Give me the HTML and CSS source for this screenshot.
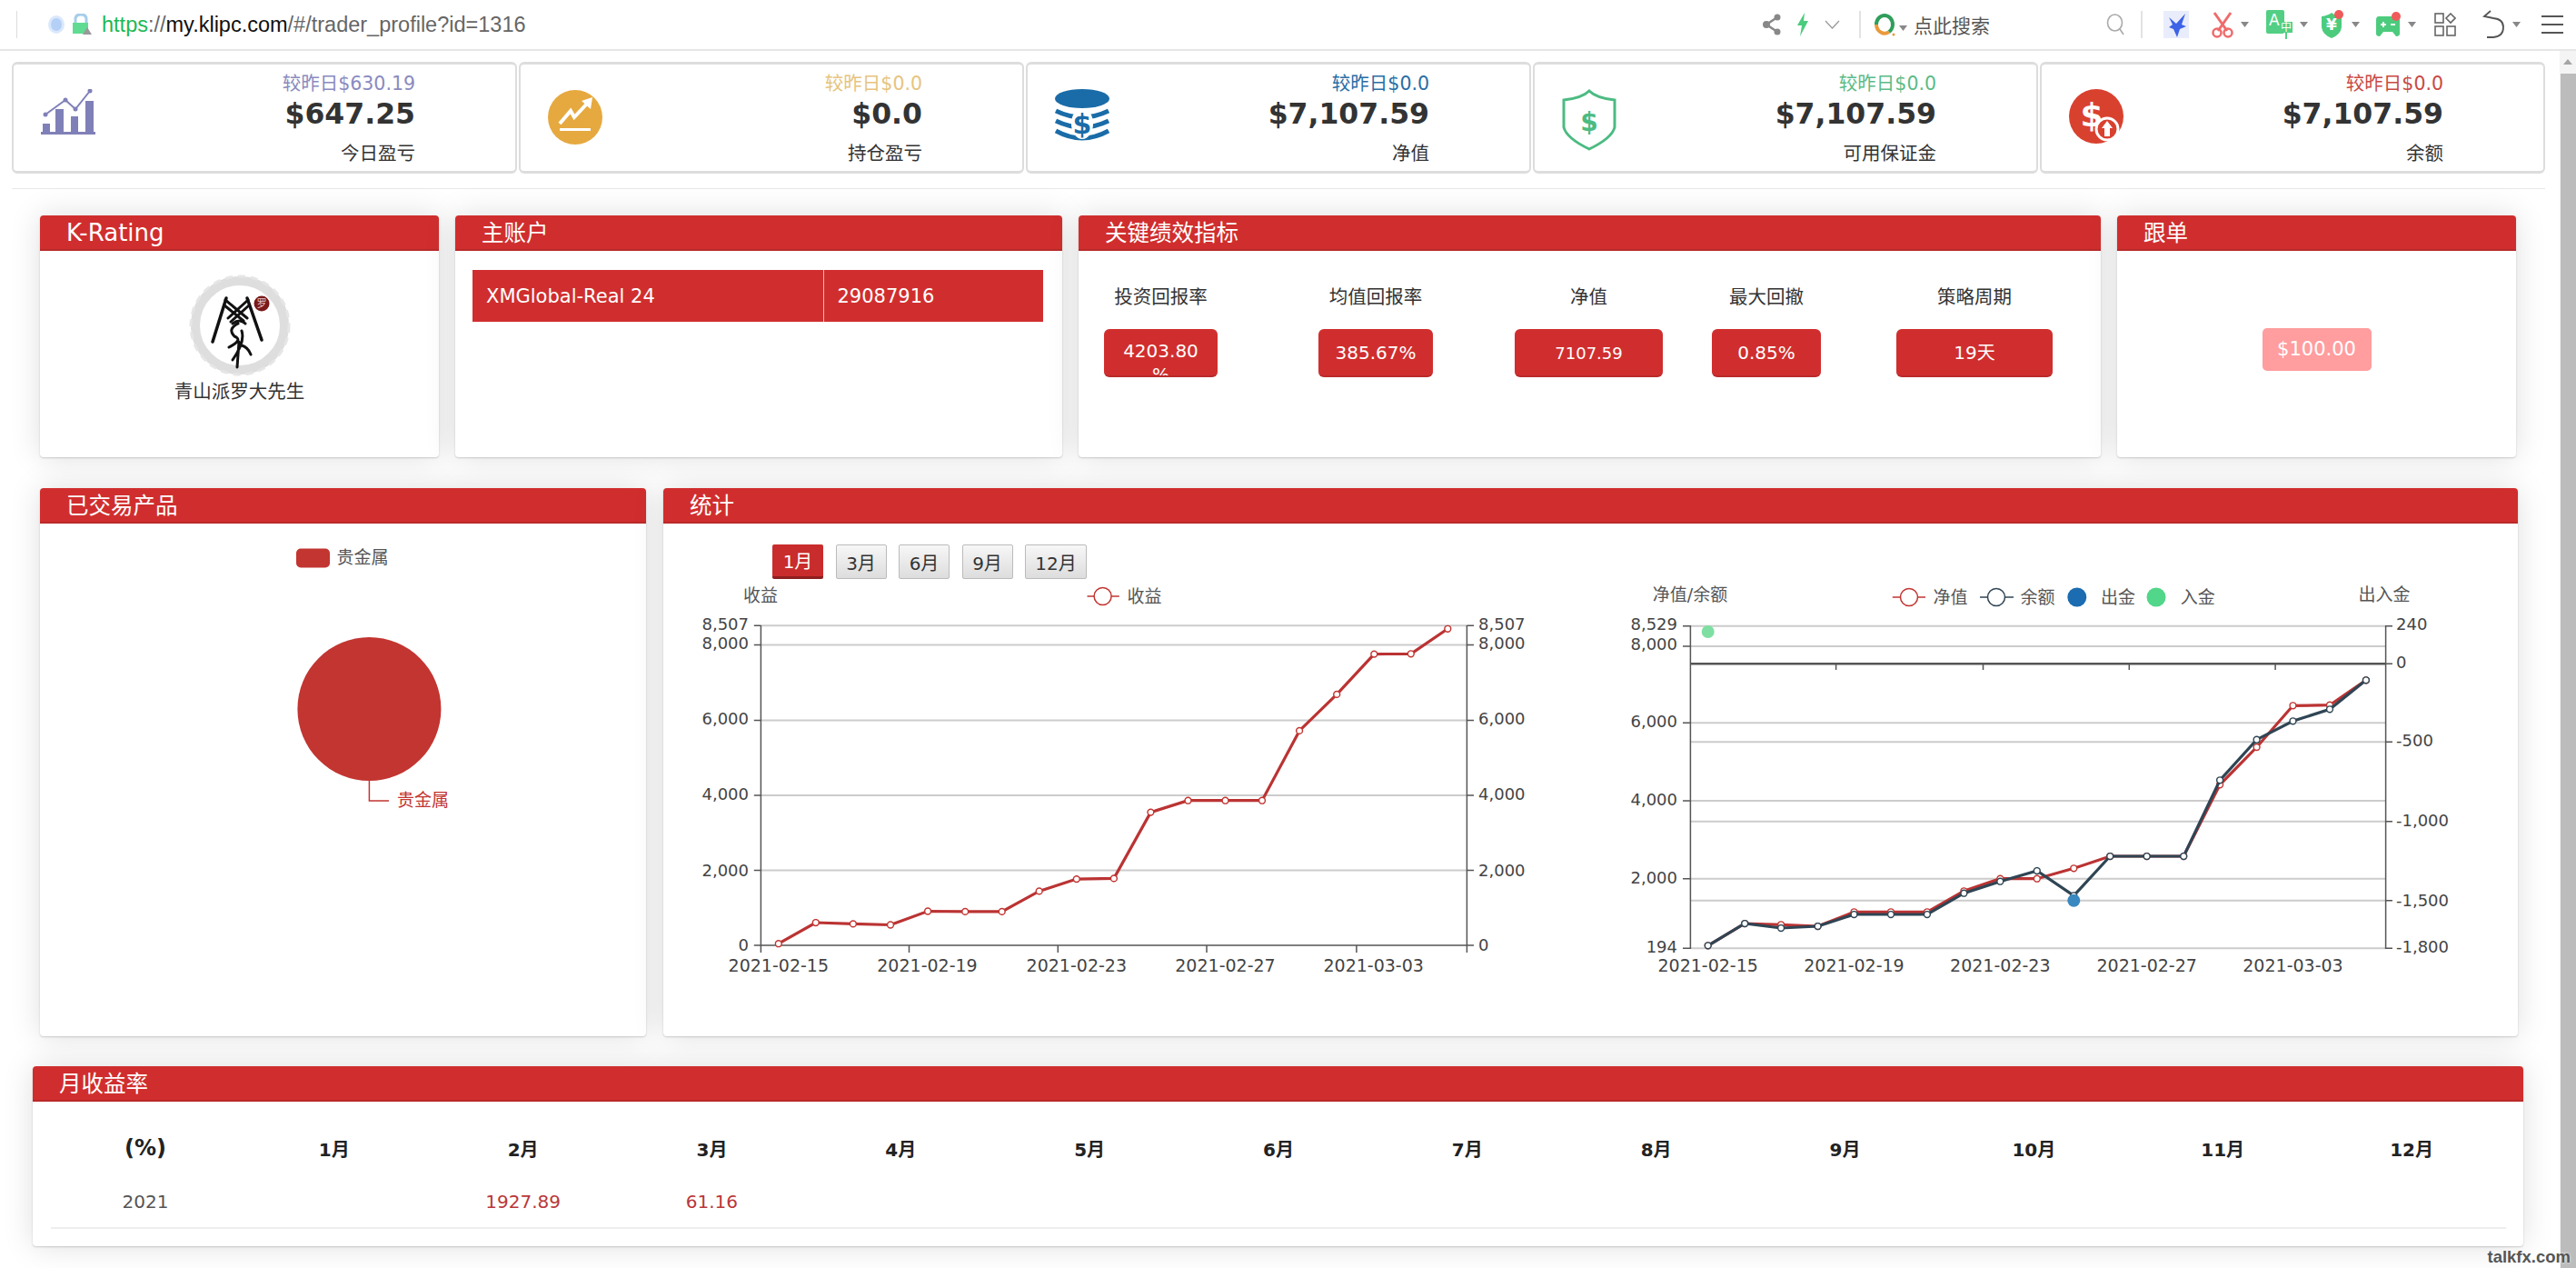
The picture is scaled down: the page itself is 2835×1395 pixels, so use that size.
FILE: index.html
```html
<!DOCTYPE html>
<html lang="en">
<head>
    <meta charset="UTF-8">
    <meta name="viewport" content="width=device-width, initial-scale=1.0">
    <title>Trader Profile - Klipc</title>
    <link rel="stylesheet" href="styles.css">
</head>
<body>

    <!-- Browser Address Bar -->
    <div class="topbar">
        <span class="bar-line"></span>
        <svg class="site-icon" width="20" height="22" viewBox="0 0 20 22">
            <ellipse cx="10" cy="11" rx="9" ry="10" fill="#dbe8fb"/>
            <ellipse cx="10" cy="11" rx="6" ry="7" fill="#b5d0f7"/>
        </svg>
        <svg class="lock-icon" width="24" height="24" viewBox="0 0 24 24">
            <path d="M6 11 V6 Q6 1 12 1 Q18 1 18 6 V11" fill="none" stroke="#a6cdea" stroke-width="3"/>
            <rect x="3" y="10" width="17" height="12" fill="#5fdc92"/>
            <polygon points="19,15 24,23 14,23" fill="#999"/>
        </svg>
        <div class="url"><span class="url-scheme">https</span>://<span class="url-host">my.klipc.com</span>/#/trader_profile?id=1316</div>

        <div class="toolbar">
            <svg width="20" height="24" viewBox="0 0 20 24">
                <path d="M16 4 L4 12 L16 20" fill="none" stroke="#888" stroke-width="2.5"/>
                <circle cx="16" cy="4" r="3.5" fill="#888"/>
                <circle cx="4" cy="12" r="4" fill="#888"/>
                <circle cx="16" cy="20" r="3.5" fill="#888"/>
            </svg>
            <svg class="tb-bolt" width="14" height="26" viewBox="0 0 14 26">
                <polygon points="9,0 1,14 6,14 4,26 13,9 8,9" fill="#4ccb7d"/>
            </svg>
            <svg class="tb-bolt" width="17" height="10" viewBox="0 0 17 10">
                <polyline points="1,1 8.5,9 16,1" fill="none" stroke="#999" stroke-width="1.2"/>
            </svg>
            <span class="tb-divider tb-divider-a"></span>
            <svg class="tb-logo" width="24" height="26" viewBox="0 0 24 26">
                <path d="M3 13 A9 10 0 0 1 21 13" fill="none" stroke="#2e9e5b" stroke-width="4"/>
                <path d="M3 13 A9 10 0 0 0 17 21" fill="none" stroke="#e99a3c" stroke-width="4"/>
                <path d="M21 13 A9 10 0 0 1 17 21" fill="none" stroke="#2e9e5b" stroke-width="4"/>
                <circle cx="22" cy="24" r="1.5" fill="#e99a3c"/>
            </svg>
            <svg class="tb-caret-search caret" width="9" height="6" viewBox="0 0 9 6"><polygon points="0,0 9,0 4.5,6"/></svg>
            <span class="search-text">点此搜索</span>
            <svg class="tb-magnifier" width="21" height="24" viewBox="0 0 21 24">
                <ellipse cx="9.500" cy="10" rx="8" ry="9" fill="none" stroke="#aaa" stroke-width="1.6"/>
                <line x1="15" y1="17" x2="19" y2="23" stroke="#aaa" stroke-width="1.6"/>
            </svg>
            <span class="tb-divider tb-divider-b"></span>

            <div class="tools">
                <div class="tool tool-sm">
                    <svg width="28" height="30" viewBox="0 0 28 30">
                        <rect width="28" height="30" fill="#e9edfb"/>
                        <polygon points="6,7 14,14 24,3 20,15 25,17 18,20 15,29 11,20 6,18 10,15" fill="#3d63e6"/>
                    </svg>
                </div>
                <div class="tool">
                    <svg width="24" height="30" viewBox="0 0 24 30">
                        <path d="M3 2 L17 22 M21 2 L7 22" fill="none" stroke="#ef6b6b" stroke-width="3"/>
                        <circle cx="6" cy="24" r="4.500" fill="none" stroke="#ef6b6b" stroke-width="2.5"/>
                        <circle cx="18" cy="24" r="4.500" fill="none" stroke="#ef6b6b" stroke-width="2.5"/>
                    </svg>
                    <svg class="caret" width="9" height="6" viewBox="0 0 9 6"><polygon points="0,0 9,0 4.5,6"/></svg>
                </div>
                <div class="tool">
                    <svg width="29" height="32" viewBox="0 0 29 32">
                        <rect width="20" height="26" rx="2" fill="#52cf84"/>
                        <text class="icon-a" x="3" y="17">A</text>
                        <rect x="15" y="13" width="14" height="12" fill="#52cf84"/>
                        <text class="icon-zh" x="22" y="23">中</text>
                        <line x1="22" y1="24" x2="22" y2="32" stroke="#52cf84" stroke-width="2"/>
                    </svg>
                    <svg class="caret" width="9" height="6" viewBox="0 0 9 6"><polygon points="0,0 9,0 4.5,6"/></svg>
                </div>
                <div class="tool">
                    <svg width="26" height="32" viewBox="0 0 26 32">
                        <path d="M1 7 Q8 6 12 3 Q16 6 23 7 V19 Q22 27 12 31 Q2 27 1 19 Z" fill="#4ccb7d"/>
                        <text class="icon-yen" x="12" y="22">¥</text>
                        <circle cx="20" cy="5" r="5" fill="#ef5a5a"/>
                    </svg>
                    <svg class="caret" width="9" height="6" viewBox="0 0 9 6"><polygon points="0,0 9,0 4.5,6"/></svg>
                </div>
                <div class="tool tool-lg">
                    <svg width="28" height="28" viewBox="0 0 28 28">
                        <path d="M4 5 H24 Q27 5 27 9 V24 Q27 27 23 27 L19 22 H9 L5 27 Q1 27 1 24 V9 Q1 5 4 5 Z" fill="#4ccb7d"/>
                        <path d="M6 14 H12 M9 11 V17 M17 14 H22" stroke="#fff" stroke-width="2"/>
                        <circle cx="23" cy="5" r="5" fill="#ef5a5a"/>
                    </svg>
                    <svg class="caret" width="9" height="6" viewBox="0 0 9 6"><polygon points="0,0 9,0 4.5,6"/></svg>
                </div>
                <div class="tool tool-sm">
                    <svg width="24" height="26" viewBox="0 0 24 26" fill="none" stroke="#666" stroke-width="1.6">
                        <rect x="1" y="1" width="9" height="10"/>
                        <polygon points="18,1 23,6 18,11 13,6"/>
                        <rect x="1" y="15" width="9" height="10"/>
                        <rect x="14" y="15" width="9" height="10"/>
                    </svg>
                </div>
                <div class="tool tool-md">
                    <svg width="25" height="32" viewBox="0 0 25 32" fill="none" stroke="#555" stroke-width="1.8">
                        <path d="M9 1 L2 7 L12 9 Q23 10 23 19 Q23 29 12 30 H5"/>
                    </svg>
                    <svg class="caret" width="9" height="6" viewBox="0 0 9 6"><polygon points="0,0 9,0 4.5,6"/></svg>
                </div>
                <svg width="24" height="22" viewBox="0 0 24 22">
                    <path d="M0 2 H24 M0 11 H24 M0 20 H24" stroke="#555" stroke-width="2"/>
                </svg>
            </div>
        </div>
    </div>

    <div class="page">
        <div class="main">

            <!-- Stat Cards -->
            <div class="stats">
                <div class="stat">
                    <svg width="60" height="50" viewBox="0 0 60 50" class="stat-icon">
                        <g fill="#8080b8">
                            <rect x="2" y="38" width="8" height="10"/>
                            <rect x="16" y="22" width="9" height="26"/>
                            <rect x="33" y="30" width="8" height="18"/>
                            <rect x="49" y="13" width="9" height="35"/>
                            <rect y="47" width="60" height="3"/>
                            <circle cx="5" cy="28" r="2.500"/>
                            <circle cx="27" cy="12" r="2.500"/>
                            <circle cx="38" cy="22" r="2.500"/>
                            <circle cx="54" cy="2" r="2.500"/>
                        </g>
                        <polyline points="5,28 27,12 38,22 54,2" fill="none" stroke="#8080b8" stroke-width="2"/>
                    </svg>
                    <div class="stat-info">
                        <div class="stat-delta delta-purple">较昨日$630.19</div>
                        <div class="stat-value">$647.25</div>
                        <div class="stat-label">今日盈亏</div>
                    </div>
                </div>
                <div class="stat">
                    <svg width="60" height="62" viewBox="0 0 60 62" class="stat-icon">
                        <circle cx="30" cy="31" r="30" fill="#e6a93f"/>
                        <polyline points="13,38 25,24 29,31 44,15" fill="none" stroke="#fff" stroke-width="4"/>
                        <polygon points="37,13 49,9 47,22" fill="#fff"/>
                        <rect x="13" y="43" width="34" height="3" fill="#fff"/>
                    </svg>
                    <div class="stat-info">
                        <div class="stat-delta delta-gold">较昨日$0.0</div>
                        <div class="stat-value">$0.0</div>
                        <div class="stat-label">持仓盈亏</div>
                    </div>
                </div>
                <div class="stat">
                    <svg width="60" height="60" viewBox="0 0 60 60" class="stat-icon">
                        <ellipse cx="30" cy="10.500" rx="30" ry="10.500" fill="#1a6ca8"/>
                        <g fill="none" stroke="#1a6ca8" stroke-width="5">
                            <path d="M1 24 Q30 38 59 24"/>
                            <path d="M1 35 Q30 49 59 35"/>
                            <path d="M1 46 Q30 62 59 46"/>
                        </g>
                        <ellipse cx="30" cy="38" rx="12" ry="17" fill="#fff"/>
                        <text class="icon-dollar dollar-blue" x="30" y="49">$</text>
                    </svg>
                    <div class="stat-info">
                        <div class="stat-delta delta-blue">较昨日$0.0</div>
                        <div class="stat-value">$7,107.59</div>
                        <div class="stat-label">净值</div>
                    </div>
                </div>
                <div class="stat">
                    <svg width="60" height="68" viewBox="0 0 60 68" class="stat-icon">
                        <path d="M30 2 Q38 10 58 12 V42 Q55 54 30 66 Q5 54 2 42 V12 Q22 10 30 2 Z" fill="none" stroke="#4cbb82" stroke-width="3"/>
                        <text class="icon-dollar dollar-green" x="30" y="46">$</text>
                    </svg>
                    <div class="stat-info">
                        <div class="stat-delta delta-green">较昨日$0.0</div>
                        <div class="stat-value">$7,107.59</div>
                        <div class="stat-label">可用保证金</div>
                    </div>
                </div>
                <div class="stat">
                    <svg width="60" height="60" viewBox="0 0 60 60" class="stat-icon">
                        <circle cx="30" cy="30" r="30" fill="#d9412f"/>
                        <text class="icon-dollar dollar-white" x="25" y="41">$</text>
                        <circle cx="42" cy="44" r="12" fill="#d9412f" stroke="#fff" stroke-width="3"/>
                        <polygon points="42,35 48,43 45,43 45,52 39,52 39,43 36,43" fill="#fff"/>
                    </svg>
                    <div class="stat-info">
                        <div class="stat-delta delta-red">较昨日$0.0</div>
                        <div class="stat-value">$7,107.59</div>
                        <div class="stat-label">余额</div>
                    </div>
                </div>
            </div>
            <div class="divider"></div>

            <!-- First Row -->
            <div class="row row-one">
                <div class="panel">
                    <h2 class="panel-title title-latin">K-Rating</h2>
                    <div class="rating-body">
                        <svg width="112" height="112" viewBox="0 0 112 112">
                            <circle cx="56" cy="56" r="49" fill="none" stroke="#dedede" stroke-width="10"/>
                            <circle cx="56" cy="56" r="54" fill="none" stroke="#e6e6e6" stroke-width="3" stroke-dasharray="8 6"/>
                            <g fill="none" stroke="#111" stroke-linecap="round">
                                <path d="M41 26 L26 74" stroke-width="3.500"/>
                                <path d="M64 26 L80 72" stroke-width="3.500"/>
                                <path d="M40 28 L64 48 M39 34 L60 51 M65 28 L43 48 M66 34 L46 52" stroke-width="3"/>
                                <path d="M48 54 Q56 48 62 54 M54 54 Q42 60 50 68 Q60 72 44 80 M58 62 Q62 74 48 94 M55 74 L53 102 M58 78 Q65 80 68 88" stroke-width="3"/>
                            </g>
                            <circle cx="80" cy="32" r="8.500" fill="#7a1a1a"/>
                            <text class="seal" x="80" y="36">罗</text>
                        </svg>
                        <div class="rating-name">青山派罗大先生</div>
                    </div>
                </div>
                <div class="panel">
                    <h2 class="panel-title">主账户</h2>
                    <table class="account-table">
                        <tr>
                            <td class="account-name">XMGlobal-Real 24</td>
                            <td>29087916</td>
                        </tr>
                    </table>
                </div>
                <div class="panel">
                    <h2 class="panel-title">关键绩效指标</h2>
                    <div class="kpi-row">
                        <div class="kpi kpi-a">
                            <div class="kpi-label">投资回报率</div>
                            <div class="kpi-value kpi-wrap">4203.80<wbr>%</div>
                        </div>
                        <div class="kpi kpi-b">
                            <div class="kpi-label">均值回报率</div>
                            <div class="kpi-value">385.67%</div>
                        </div>
                        <div class="kpi kpi-c">
                            <div class="kpi-label">净值</div>
                            <div class="kpi-value kpi-small">7107.59</div>
                        </div>
                        <div class="kpi kpi-d">
                            <div class="kpi-label">最大回撤</div>
                            <div class="kpi-value">0.85%</div>
                        </div>
                        <div class="kpi kpi-e">
                            <div class="kpi-label">策略周期</div>
                            <div class="kpi-value">19天</div>
                        </div>
                    </div>
                </div>
                <div class="panel">
                    <h2 class="panel-title">跟单</h2>
                    <div class="follow-btn">$100.00</div>
                </div>
            </div>

            <!-- Second Row -->
            <div class="row row-two">
                <div class="panel">
                    <h2 class="panel-title">已交易产品</h2>
                    <svg class="pie" width="667" height="500" viewBox="0 0 667 500">
                        <rect x="282" y="27.500" width="37" height="21" rx="5" fill="#c23531"/>
                        <text class="chart-text" x="326.500" y="44">贵金属</text>
                        <circle cx="362.400" cy="204" r="79" fill="#c23531"/>
                        <polyline points="362.400,283 362.400,305 384,305" fill="none" stroke="#c23531" stroke-width="1.500"/>
                        <text class="chart-text text-red" x="393" y="311">贵金属</text>
                    </svg>
                </div>
                <div class="panel">
                    <h2 class="panel-title">统计</h2>
                    <div class="range-btns">
                        <button class="range-btn active">1月</button>
                        <button class="range-btn">3月</button>
                        <button class="range-btn">6月</button>
                        <button class="range-btn">9月</button>
                        <button class="range-btn range-wide">12月</button>
                    </div>
                    <div class="charts">
                        <!-- Profit Chart -->
                        <svg width="930" height="450" viewBox="0 0 930 450">
                            <defs>
                                <marker id="dotRed" viewBox="0 0 10 10" refX="5" refY="5" markerWidth="9" markerHeight="9" markerUnits="userSpaceOnUse">
                                    <circle cx="5" cy="5" r="3.800" fill="#fff" stroke="#c23531" stroke-width="1.600"/>
                                </marker>
                            </defs>
                            <g class="grid">
                                <path d="M87.400 48.200 H864.400 M87.400 69.600 H864.400 M87.400 152.500 H864.400 M87.400 235 H864.400 M87.400 317.500 H864.400"/>
                            </g>
                            <g class="axis">
                                <path d="M87.400 48 V408 M864.400 48 V408 M79.800 400 H872"/>
                                <path d="M79.800 48.200 H87.400 M79.800 69.600 H87.400 M79.800 152.500 H87.400 M79.800 235 H87.400 M79.800 317.500 H87.400"/>
                                <path d="M864.400 48.200 H872 M864.400 69.600 H872 M864.400 152.500 H872 M864.400 235 H872 M864.400 317.500 H872"/>
                                <path d="M250.500 400 V408 M414.300 400 V408 M578 400 V408 M742.900 400 V408"/>
                            </g>
                            <polyline class="line line-red" marker-start="url(#dotRed)" marker-mid="url(#dotRed)" marker-end="url(#dotRed)" points="106.800,398.200 147.800,375 188.900,376.400 230,377.500 271.100,362.500 312.200,362.900 352.700,362.900 393.700,340.400 434.800,327.100 475.900,326.400 516.400,253.600 557.500,240.700 598.500,240.700 639,240.700 680.100,163.900 721.200,123.900 762.300,79.600 802.800,79.300 843.300,51.800"/>

                            <text class="chart-text anchor-mid" x="87" y="22">收益</text>
                            <path d="M446.500 16 H481.800" stroke="#c23531" stroke-width="1.500"/>
                            <circle cx="463.600" cy="16" r="9.500" fill="#fff" stroke="#c23531" stroke-width="1.500"/>
                            <text class="chart-text" x="490.500" y="23">收益</text>

                            <g class="tick-text anchor-end">
                                <text x="74" y="53">8,507</text>
                                <text x="74" y="74">8,000</text>
                                <text x="74" y="157">6,000</text>
                                <text x="74" y="240">4,000</text>
                                <text x="74" y="324">2,000</text>
                                <text x="74" y="406">0</text>
                            </g>
                            <g class="tick-text">
                                <text x="877" y="53">8,507</text>
                                <text x="877" y="74">8,000</text>
                                <text x="877" y="157">6,000</text>
                                <text x="877" y="240">4,000</text>
                                <text x="877" y="324">2,000</text>
                                <text x="877" y="406">0</text>
                            </g>
                            <g class="date-text">
                                <text x="106.800" y="429">2021-02-15</text>
                                <text x="270.500" y="429">2021-02-19</text>
                                <text x="434.800" y="429">2021-02-23</text>
                                <text x="598.500" y="429">2021-02-27</text>
                                <text x="761.700" y="429">2021-03-03</text>
                            </g>
                        </svg>

                        <!-- Equity / Balance Chart -->
                        <svg width="950" height="450" viewBox="0 0 950 450">
                            <defs>
                                <marker id="dotRedTwo" viewBox="0 0 10 10" refX="5" refY="5" markerWidth="9" markerHeight="9" markerUnits="userSpaceOnUse">
                                    <circle cx="5" cy="5" r="3.800" fill="#fff" stroke="#c23531" stroke-width="1.600"/>
                                </marker>
                                <marker id="dotDark" viewBox="0 0 10 10" refX="5" refY="5" markerWidth="9" markerHeight="9" markerUnits="userSpaceOnUse">
                                    <circle cx="5" cy="5" r="3.800" fill="#fff" stroke="#2f4554" stroke-width="1.600"/>
                                </marker>
                            </defs>
                            <g class="grid">
                                <path d="M100.400 48.700 H865.600 M100.400 71 H865.600 M100.400 155.300 H865.600 M100.400 176.300 H865.600 M100.400 241 H865.600 M100.400 263.700 H865.600 M100.400 326.700 H865.600 M100.400 350.700 H865.600 M100.400 403.300 H865.600"/>
                            </g>
                            <g class="axis">
                                <path d="M100.400 48 V404 M865.600 48 V404"/>
                                <path class="axis-zero" d="M100.400 90.300 H865.600"/>
                                <path d="M260.600 90.300 V97 M422.500 90.300 V97 M583.300 90.300 V97 M744.100 90.300 V97"/>
                                <path d="M92 48.700 H100.400 M92 71 H100.400 M92 155.300 H100.400 M92 241 H100.400 M92 326.700 H100.400 M92 403.300 H100.400"/>
                                <path d="M865.600 48.700 H873 M865.600 90.300 H873 M865.600 176.300 H873 M865.600 263.700 H873 M865.600 350.700 H873 M865.600 403.300 H873"/>
                            </g>
                            <polyline class="line line-red" marker-start="url(#dotRedTwo)" marker-mid="url(#dotRedTwo)" marker-end="url(#dotRedTwo)" points="119.700,400.300 160.200,376 200.100,377.300 240.600,379 280.500,363.300 321,363.300 360.900,363.300 401.400,340.300 441.300,326.700 481.800,326.700 522.300,315.300 562.200,302 602.700,302 643.200,302 683.100,223.300 723.600,182 763.500,136.300 804,135.700 843.900,108.300"/>
                            <polyline class="line line-dark" marker-start="url(#dotDark)" marker-mid="url(#dotDark)" marker-end="url(#dotDark)" points="119.700,400.300 160.200,376 200.100,381 240.600,379 280.500,366 321,366 360.900,366 401.400,342.700 441.300,329.700 481.800,318 522.300,345.300 562.200,302 602.700,302 643.200,302 683.100,218.300 723.600,173.700 763.500,153.300 804,140.300 843.900,108.300"/>
                            <circle cx="119.700" cy="55" r="7" fill="#7fdfa3"/>
                            <circle cx="522.300" cy="350.700" r="7" fill="#3a88c0"/>

                            <text class="chart-text anchor-mid" x="100" y="21">净值/余额</text>
                            <text class="chart-text anchor-mid" x="864" y="21">出入金</text>
                            <path d="M322.800 17 H359" stroke="#c23531" stroke-width="1.500"/>
                            <circle cx="341" cy="17" r="9.500" fill="#fff" stroke="#c23531" stroke-width="1.500"/>
                            <text class="chart-text" x="367.400" y="24">净值</text>
                            <path d="M419 17 H456" stroke="#2f4554" stroke-width="1.500"/>
                            <circle cx="437" cy="17" r="9.500" fill="#fff" stroke="#2f4554" stroke-width="1.500"/>
                            <text class="chart-text" x="463.600" y="24">余额</text>
                            <circle cx="525.800" cy="17" r="10.500" fill="#1b6cb0"/>
                            <text class="chart-text" x="552" y="24">出金</text>
                            <circle cx="613" cy="17" r="10.500" fill="#52d68a"/>
                            <text class="chart-text" x="639.700" y="24">入金</text>

                            <g class="tick-text anchor-end">
                                <text x="86" y="53">8,529</text>
                                <text x="86" y="75">8,000</text>
                                <text x="86" y="160">6,000</text>
                                <text x="86" y="246">4,000</text>
                                <text x="86" y="332">2,000</text>
                                <text x="86" y="408">194</text>
                            </g>
                            <g class="tick-text">
                                <text x="877" y="53">240</text>
                                <text x="877" y="95">0</text>
                                <text x="877" y="181">-500</text>
                                <text x="877" y="269">-1,000</text>
                                <text x="877" y="357">-1,500</text>
                                <text x="877" y="408">-1,800</text>
                            </g>
                            <g class="date-text">
                                <text x="119.700" y="429">2021-02-15</text>
                                <text x="280.500" y="429">2021-02-19</text>
                                <text x="441.300" y="429">2021-02-23</text>
                                <text x="602.700" y="429">2021-02-27</text>
                                <text x="763.500" y="429">2021-03-03</text>
                            </g>
                        </svg>
                    </div>
                </div>
            </div>

            <!-- Monthly Returns -->
            <div class="panel monthly">
                <h2 class="panel-title">月收益率</h2>
                <table class="monthly-table">
                    <tr>
                        <th class="th-unit">(%)</th><th>1月</th><th>2月</th><th>3月</th><th>4月</th><th>5月</th><th>6月</th>
                        <th>7月</th><th>8月</th><th>9月</th><th>10月</th><th>11月</th><th>12月</th>
                    </tr>
                    <tr>
                        <td>2021</td><td></td><td class="gain">1927.89</td><td class="gain">61.16</td><td></td><td></td><td></td>
                        <td></td><td></td><td></td><td></td><td></td><td></td>
                    </tr>
                </table>
            </div>
        </div>

        <!-- Scrollbar -->
        <div class="scrollbar">
            <div class="scroll-up"></div>
            <div class="scroll-thumb"></div>
        </div>
    </div>

    <div class="watermark">talkfx.com</div>

</body>
</html>
```

FILE: styles.css
```css
/* Global Styles */
* {
    margin: 0;
    padding: 0;
    box-sizing: border-box;
}

body {
    font-family: "DejaVu Sans", "Noto Sans CJK SC", sans-serif;
    background-color: #ffffff;
    color: #333;
    width: 2835px;
    height: 1395px;
    overflow: hidden;
    position: relative;
}

/* Address Bar */
.topbar {
    display: flex;
    align-items: center;
    height: 56px;
    padding: 0 14px 0 18px;
    border-bottom: 2px solid #e6e6e6;
}

.bar-line {
    width: 1px;
    height: 30px;
    background-color: #ddd;
}

.site-icon {
    margin-left: 33px;
}

.lock-icon {
    margin-left: 5px;
}

.url {
    margin-left: 11px;
    font-family: "Liberation Sans", sans-serif;
    font-size: 23.500px;
    color: #666;
}

.url-scheme {
    color: #1db954;
}

.url-host {
    color: #111;
}

.toolbar {
    display: flex;
    align-items: center;
    margin-left: auto;
}

.tb-bolt {
    margin-left: 17px;
}

.tb-divider {
    width: 2px;
    height: 30px;
    background-color: #e2e2e2;
}

.tb-divider-a {
    margin-left: 21px;
}

.tb-divider-b {
    margin-left: 17px;
}

.tb-logo {
    margin-left: 14px;
}

.tb-caret-search {
    margin-left: 4px;
    margin-top: 8px;
}

.caret {
    fill: #888;
}

.search-text {
    margin-left: 7px;
    font-size: 21px;
    color: #555;
    width: 84px;
    white-space: nowrap;
}

.tb-magnifier {
    margin-left: 128px;
}

.tools {
    display: flex;
    align-items: center;
    margin-left: 23px;
}

.tool {
    display: flex;
    align-items: center;
    gap: 8px;
    width: 60px;
}

.tool-sm {
    width: 53px;
}

.tool-md {
    width: 65px;
}

.tool-lg {
    width: 65px;
}

.icon-a {
    font-size: 17px;
    fill: #fff;
}

.icon-zh {
    font-size: 12px;
    fill: #fff;
    text-anchor: middle;
}

.icon-yen {
    font-size: 17px;
    font-weight: bold;
    fill: #fff;
    text-anchor: middle;
}

/* Page Layout */
.page {
    display: flex;
}

.main {
    width: 2817px;
}

.scrollbar {
    width: 18px;
    height: 1339px;
    background-color: #f4f4f4;
}

.scroll-up {
    height: 25px;
    position: relative;
}

.scroll-up::after {
    content: "";
    position: absolute;
    left: 4px;
    top: 9px;
    border-left: 5px solid transparent;
    border-right: 5px solid transparent;
    border-bottom: 6px solid #a5a5a5;
}

.scroll-thumb {
    height: 1314px;
    margin-left: 1px;
    background-color: #bcbcbc;
}

/* Stat Cards */
.stats {
    display: flex;
    gap: 2px;
    padding: 12px 16px 0 13px;
}

.stat {
    flex: 1;
    display: flex;
    height: 123px;
    padding: 27px 110px 0 30px;
    border-style: solid;
    border-color: #dddddd;
    border-width: 3px 2px;
    border-radius: 6px;
    position: relative;
}

.stat-icon {
    flex-shrink: 0;
}

.stat-info {
    margin-left: auto;
    margin-top: -27px;
    padding-top: 8px;
    text-align: right;
}

.stat-delta {
    font-size: 20.500px;
    line-height: 26px;
    white-space: nowrap;
}

.delta-purple {
    color: #8a8abf;
}

.delta-gold {
    color: #e6c47e;
}

.delta-blue {
    color: #2a6ea5;
}

.delta-green {
    color: #5cbb87;
}

.delta-red {
    color: #c84a44;
}

.stat-value {
    font-size: 31.500px;
    font-weight: bold;
    line-height: 40px;
    color: #333;
}

.stat-label {
    margin-top: 11px;
    font-size: 20.500px;
    line-height: 26px;
    color: #333;
}

.icon-dollar {
    font-weight: bold;
    text-anchor: middle;
}

.dollar-blue {
    font-size: 30px;
    fill: #1a6ca8;
}

.dollar-green {
    font-size: 28px;
    fill: #4cbb82;
}

.dollar-white {
    font-size: 36px;
    fill: #fff;
}

.divider {
    height: 1px;
    margin: 16px 16px 0 13px;
    background-color: #e8e8e8;
}

/* Panels */
.row {
    display: grid;
    margin-left: 44px;
}

.row-one {
    grid-template-columns: 439px 668px 1125px 439px;
    gap: 18px;
    height: 266px;
    margin-top: 29px;
}

.row-two {
    grid-template-columns: 667px 2041px;
    gap: 19px;
    height: 603px;
    margin-top: 34px;
}

.panel {
    background-color: #ffffff;
    border-radius: 4px;
    box-shadow: 0 0 34px rgba(0, 0, 0, 0.13), 0 1px 2px rgba(0, 0, 0, 0.18);
}

.panel-title {
    height: 39px;
    padding-left: 29px;
    font-size: 24.500px;
    font-weight: normal;
    line-height: 39px;
    color: #ffffff;
    background-color: #d02e2e;
    border-bottom: 2px solid #b92a2a;
    border-radius: 4px 4px 0 0;
}

.title-latin {
    font-size: 26px;
}

/* K-Rating */
.rating-body {
    display: flex;
    flex-direction: column;
    align-items: center;
    padding-top: 26px;
}

.rating-body svg {
    display: block;
}

.seal {
    font-size: 11px;
    fill: #e8c8c8;
    text-anchor: middle;
}

.rating-name {
    margin-top: 4px;
    font-size: 20.500px;
    line-height: 26px;
    color: #333;
}

/* Main Account */
.account-table {
    width: 628px;
    height: 57px;
    margin: 21px 0 0 19px;
    border-collapse: collapse;
    color: #ffffff;
    background-color: #d02e2e;
    font-size: 21px;
}

.account-table td {
    padding-left: 15px;
}

.account-name {
    width: 386px;
    border-right: 1px solid #eebcbc;
}

/* KPI */
.kpi-row {
    display: flex;
    padding: 38px 0 0 28px;
}

.kpi {
    display: flex;
    flex-direction: column;
    align-items: center;
}

.kpi-a {
    width: 125px;
}

.kpi-b {
    width: 126px;
    margin-left: 111px;
}

.kpi-c {
    width: 163px;
    margin-left: 90px;
}

.kpi-d {
    width: 120px;
    margin-left: 54px;
}

.kpi-e {
    width: 172px;
    margin-left: 83px;
}

.kpi-label {
    font-size: 20.500px;
    line-height: 26px;
    white-space: nowrap;
    color: #333;
}

.kpi-value {
    width: 100%;
    height: 53px;
    margin-top: 22px;
    font-size: 20px;
    line-height: 53px;
    text-align: center;
    color: #ffffff;
    background-color: #d02e2e;
    border-bottom: 2px solid #b92a2a;
    border-radius: 6px;
    overflow: hidden;
}

.kpi-wrap {
    padding: 11px 14px 0;
    line-height: 26px;
}

.kpi-small {
    font-size: 18px;
}

/* Follow */
.follow-btn {
    width: 120px;
    height: 47px;
    margin: 85px auto 0;
    font-size: 21px;
    line-height: 47px;
    text-align: center;
    color: #fff;
    background-color: #ff9d9f;
    border-radius: 5px;
}

/* Charts */
.pie {
    display: block;
}

.range-btns {
    display: flex;
    padding: 23px 0 0 120px;
    height: 64px;
}

.range-btn {
    width: 56px;
    height: 38px;
    margin-right: 13.500px;
    font-family: inherit;
    font-size: 20px;
    color: #333;
    background: linear-gradient(#f7f7f7, #dddddd);
    border: 1px solid #bbbbbb;
    border-radius: 2px;
}

.range-btn.active {
    color: #ffffff;
    background: #c92c2c;
    border: none;
    border-bottom: 3px solid #8e1f1f;
}

.range-wide {
    width: 68px;
}

.charts {
    display: flex;
    gap: 80px;
    padding-left: 20px;
}

.charts svg {
    flex-shrink: 0;
}

.grid {
    fill: none;
    stroke: #cccccc;
    stroke-width: 2;
}

.axis {
    fill: none;
    stroke: #555555;
    stroke-width: 1.500;
}

.axis-zero {
    stroke-width: 2.500;
}

.line {
    fill: none;
    stroke-width: 3.200;
}

.line-red {
    stroke: #bb3333;
}

.line-dark {
    stroke: #2f4554;
}

.chart-text {
    font-size: 19px;
    fill: #555;
}

.text-red {
    fill: #c23531;
}

.tick-text {
    font-size: 18px;
    fill: #444;
}

.date-text {
    font-size: 19px;
    fill: #444;
    text-anchor: middle;
}

.anchor-mid {
    text-anchor: middle;
}

.anchor-end {
    text-anchor: end;
}

/* Monthly Table */
.monthly {
    width: 2741px;
    height: 198px;
    margin: 33px 0 0 36px;
}

.monthly-table {
    width: 2702px;
    margin: 21px 0 0 20px;
    table-layout: fixed;
    border-collapse: collapse;
    text-align: center;
    font-size: 20px;
}

.monthly-table th {
    height: 60px;
    color: #222;
}

.monthly-table th.th-unit {
    font-size: 24px;
}

.monthly-table td {
    height: 58px;
    color: #555;
    border-bottom: 2px solid #eeeeee;
}

.monthly-table td.gain {
    color: #b9373a;
}

/* Watermark */
.watermark {
    position: absolute;
    right: 6px;
    bottom: 0;
    font-family: "Liberation Sans", sans-serif;
    font-size: 18.500px;
    font-weight: bold;
    line-height: 24px;
    color: #555;
    text-shadow: 0 0 3px #ffffff;
}
```
